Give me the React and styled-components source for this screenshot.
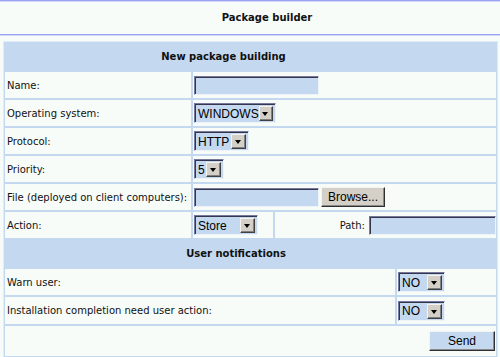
import styled, { createGlobalStyle } from "styled-components";

const GlobalStyle = createGlobalStyle`
  body {
    margin: 0;
    background: #f7fcf9;
    font-family: "DejaVu Sans", Verdana, sans-serif;
    font-size: 10px;
    color: #111;
  }
`;

const TopBar = styled.div`
  height: 33px;
  border-top: 1px solid #9aa3f2;
  border-bottom: 1px solid #9aa3f2;
  box-shadow: inset 0 1px 0 #d3d8fb, 0 1px 0 #d3d8fb;
  display: flex;
  align-items: center;
  justify-content: center;
  padding-left: 34px;
  font-weight: bold;
`;

const Panel = styled.div`
  margin: 6px 2px 0 3px;
  border: 1px solid #e2ecf8;
  background: #c4d9f0;
  padding: 1px;
  display: flex;
  flex-direction: column;
  gap: 2px;
`;

const Heading = styled.div`
  height: ${(p) => p.$h || 27}px;
  display: flex;
  align-items: center;
  justify-content: center;
  padding-right: ${(p) => p.$shift || 0}px;
  font-weight: bold;
`;

const Row = styled.div`
  display: grid;
  grid-template-columns: ${(p) => p.$cols || "186px 1fr"};
  gap: 2px;
`;

const Cell = styled.div`
  height: ${(p) => p.$h || 26}px;
  background: #f7fcf9;
  display: flex;
  align-items: center;
  gap: ${(p) => p.$gap || 2}px;
  padding: 0 ${(p) => p.$pr || 0}px 0 ${(p) => p.$pl ?? 1}px;
  justify-content: ${(p) => (p.$end ? "flex-end" : "flex-start")};
`;

const TextInput = styled.div`
  width: ${(p) => p.$w}px;
  height: 19px;
  box-sizing: border-box;
  background: #c4d9f0;
  border: 1px solid;
  border-color: #77789a #eef3fa #eef3fa #77789a;
  box-shadow: inset 1px 1px 0 #34354f;
`;

const SelectBox = styled.div`
  width: ${(p) => p.$w}px;
  height: 20px;
  box-sizing: border-box;
  background: #c4d9f0;
  border: 1px solid;
  border-color: #77789a #eef3fa #eef3fa #77789a;
  box-shadow: inset 1px 1px 0 #34354f;
  display: flex;
  align-items: center;
  justify-content: space-between;
  padding: 2px 2px 1px 3px;
  font-family: "Liberation Sans", Arial, sans-serif;
  font-size: 12px;
  color: #000;
`;

const Arrow = styled.span`
  width: 15px;
  height: 15px;
  box-sizing: border-box;
  background: #d4d0c8;
  border: 1px solid;
  border-color: #f4f3ef #404040 #404040 #f4f3ef;
  box-shadow: inset -1px -1px 0 #808080;
  display: flex;
  align-items: center;
  justify-content: center;

  &::after {
    content: "";
    border-left: 3px solid transparent;
    border-right: 3px solid transparent;
    border-top: 4px solid #000;
    margin: 1px 1px 0 0;
  }
`;

const Button = styled.div`
  width: ${(p) => p.$w}px;
  height: 20px;
  box-sizing: border-box;
  background: ${(p) => (p.$blue ? "#c4d9f0" : "#d4d0c8")};
  border: 1px solid;
  border-color: #f4f4f4 #303030 #303030 #f4f4f4;
  box-shadow: inset -1px -1px 0 #8a8a8a;
  display: flex;
  align-items: center;
  justify-content: center;
  font-family: "Liberation Sans", Arial, sans-serif;
  font-size: 12px;
  color: #000;
`;

const Label = styled.span`
  padding-left: 1px;
`;

const Select = ({ value, w }) => (
  <SelectBox $w={w}>
    <span>{value}</span>
    <Arrow />
  </SelectBox>
);

const fields = [
  { label: "Operating system:", value: "WINDOWS", w: 82 },
  { label: "Protocol:", value: "HTTP", w: 55 },
  { label: "Priority:", value: "5", w: 30 },
];

const notices = [
  { label: "Warn user:", h: 26 },
  { label: "Installation completion need user action:", h: 27 },
];

export default function App() {
  return (
    <>
      <GlobalStyle />
      <TopBar>Package builder</TopBar>
      <Panel>
        <Heading $shift={54}>New package building</Heading>
        <Row>
          <Cell><Label>Name:</Label></Cell>
          <Cell><TextInput $w={125} /></Cell>
        </Row>
        {fields.map((f) => (
          <Row key={f.label}>
            <Cell><Label>{f.label}</Label></Cell>
            <Cell><Select value={f.value} w={f.w} /></Cell>
          </Row>
        ))}
        <Row>
          <Cell><Label>File (deployed on client computers):</Label></Cell>
          <Cell>
            <TextInput $w={125} />
            <Button $w={64}>Browse...</Button>
          </Cell>
        </Row>
        <Row $cols="186px 80px 1fr">
          <Cell><Label>Action:</Label></Cell>
          <Cell><Select value="Store" w={64} /></Cell>
          <Cell $end $gap={4}>
            <span>Path:</span>
            <TextInput $w={127} />
          </Cell>
        </Row>
        <Heading $shift={29}>User notifications</Heading>
        {notices.map((n) => (
          <Row key={n.label} $cols="1fr 99px">
            <Cell $h={n.h}><Label>{n.label}</Label></Cell>
            <Cell $h={n.h}><Select value="NO" w={47} /></Cell>
          </Row>
        ))}
        <Row $cols="1fr">
          <Cell $end $pr={1} $h={30}>
            <Button $w={66} $blue>Send</Button>
          </Cell>
        </Row>
      </Panel>
    </>
  );
}
